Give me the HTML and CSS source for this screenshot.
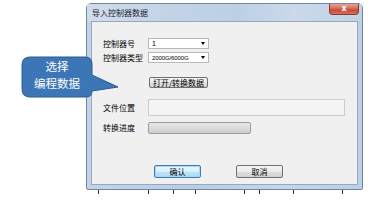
FILE: index.html
```html
<!DOCTYPE html>
<html lang="zh">
<head>
<meta charset="utf-8">
<link rel="stylesheet" href="styles.css">
</head>
<body>
<div class="stage">
  <div class="window">
    <div class="titlebar">
      <span class="title">导入控制器数据</span>
      <span class="close">x</span>
    </div>
    <div class="client">
      <div class="row r1">
        <span class="label">控制器号</span>
        <span class="combo"><span class="val">1</span><span class="arrow"></span></span>
      </div>
      <div class="row r2">
        <span class="label">控制器类型</span>
        <span class="combo"><span class="val small">2000G/6000G</span><span class="arrow"></span></span>
      </div>
      <div class="row r3">
        <span class="btn open">打开/转换数据</span>
      </div>
      <div class="row r4">
        <span class="label">文件位置</span>
        <span class="textbox"></span>
      </div>
      <div class="row r5">
        <span class="label">转换进度</span>
        <span class="progress"></span>
      </div>
      <div class="actions">
        <span class="btn ok">确认</span>
        <span class="btn cancel">取消</span>
      </div>
    </div>
  </div>
  <div class="ticks"></div>
  <div class="callout">
    <svg class="bubble" viewBox="18 53 104 48" width="104" height="48">
      <path d="M30,57 H85 Q92,57 92,64 V75 L118,87 L92,91 Q92,97 86,97 H30 Q22,97 22,89 V65 Q22,57 30,57 Z" fill="#3d76b6" stroke="#2a5a90" stroke-width="1"/>
    </svg>
    <div class="bubble-text">选择<br>编程数据</div>
  </div>
</div>
</body>
</html>
```
FILE: styles.css
```css
html, body {
  margin: 0;
  padding: 0;
  background: #ffffff;
}
body {
  width: 375px;
  height: 200px;
  overflow: hidden;
  font-family: "Noto Sans CJK SC", "Noto Sans", sans-serif;
  color: #000;
}
.stage {
  position: relative;
  padding: 3px 0 0 86px;
}
.window {
  box-sizing: border-box;
  width: 277px;
  height: 187px;
  border: 1px solid #6f86a3;
  border-radius: 5px 5px 2px 2px;
  background: linear-gradient(90deg, #c3d4e7 0%, #b9cde3 40%, #c6d6e8 70%, #bccfe4 100%);
  padding: 0 4px 4px 4px;
  display: flex;
  flex-direction: column;
}
.titlebar {
  height: 17px;
  display: flex;
  justify-content: space-between;
  align-items: center;
  background: linear-gradient(90deg, #cfdcea 0%, #c3d3e6 30%, #bcd0e5 55%, #cbd9e9 75%, #c0d2e6 100%);
  margin: 0 -4px;
  padding: 0 4px;
}
.title {
  font-size: 8px;
  line-height: 1;
  color: #1e2530;
  padding-left: 1px;
}
.close {
  align-self: flex-start;
  width: 30px;
  height: 11px;
  margin-right: -1px;
  box-sizing: border-box;
  border: 1px solid #8b3b32;
  border-top: none;
  border-radius: 0 0 4px 4px;
  background: linear-gradient(#e8a496 0%, #d66a57 45%, #c44a36 60%, #d4705d 100%);
  color: #fff;
  font-family: "DejaVu Sans", sans-serif;
  font-size: 8px;
  font-weight: bold;
  line-height: 10px;
  text-align: center;
}
.client {
  flex: 1;
  box-sizing: border-box;
  background: #f0f0f0;
  border: 1px solid #95a8c0;
  padding: 16px 0 0 11px;
  display: flex;
  flex-direction: column;
}
.row {
  display: flex;
  align-items: center;
}
.label {
  width: 45px;
  font-size: 8px;
  line-height: 1;
  white-space: nowrap;
}
.combo {
  box-sizing: border-box;
  width: 61px;
  height: 11px;
  border: 1px solid #b8b8b8;
  background: #fff;
  display: flex;
  align-items: center;
  justify-content: space-between;
  padding: 0 3px 0 3px;
}
.val {
  font-family: "Liberation Sans", sans-serif;
  font-size: 7px;
  line-height: 1;
}
.val.small {
  font-size: 6px;
  letter-spacing: -0.1px;
}
.arrow {
  width: 0;
  height: 0;
  border-left: 2.5px solid transparent;
  border-right: 2.5px solid transparent;
  border-top: 3px solid #000;
}
.r1 { height: 11px; }
.r2 { height: 11px; margin-top: 3px; }
.r3 { height: 11px; margin-top: 14px; padding-left: 46px; }
.r4 { height: 17px; margin-top: 11px; }
.r5 { height: 12px; margin-top: 6px; }
.btn {
  box-sizing: border-box;
  height: 11px;
  border: 1px solid #707070;
  border-radius: 2px;
  background: linear-gradient(#f4f4f4 0%, #ebebeb 50%, #dddddd 51%, #d2d2d2 100%);
  font-size: 8px;
  line-height: 9px;
  text-align: center;
  white-space: nowrap;
}
.open {
  width: 59px;
}
.textbox {
  box-sizing: border-box;
  width: 197px;
  height: 17px;
  border: 1px solid #cccccc;
  background: #f4f4f4;
}
.progress {
  box-sizing: border-box;
  width: 103px;
  height: 12px;
  border: 1px solid #9a9a9a;
  border-radius: 2px;
  background: linear-gradient(#e9e9e9 0%, #dadada 50%, #cfcfcf 100%);
}
.actions {
  display: flex;
  margin-top: 31px;
  padding-left: 51px;
  gap: 35px;
}
.actions .btn {
  width: 47px;
  height: 13px;
  line-height: 11px;
}
.ok {
  border-color: #3c7fb1 !important;
  box-shadow: inset 0 0 0 1px #a6d6f2;
  background: linear-gradient(#eaf6fd 0%, #d9f0fc 50%, #bee6fd 51%, #a7d9f5 100%) !important;
}
.ticks {
  height: 5px;
  margin-left: 12px;
  width: 262px;
  background-image:
    linear-gradient(#333, #333), linear-gradient(#333, #333), linear-gradient(#333, #333),
    linear-gradient(#333, #333), linear-gradient(#333, #333), linear-gradient(#333, #333),
    linear-gradient(#333, #333), linear-gradient(#333, #333);
  background-size: 1px 4px;
  background-repeat: no-repeat;
  background-position: 0 0, 50px 0, 75px 0, 97px 0, 146px 0, 161px 0, 195px 0, 244px 0;
}
.callout {
  position: absolute;
  left: 18px;
  top: 53px;
  width: 104px;
  height: 48px;
}
.bubble {
  position: absolute;
  left: 0;
  top: 0;
  display: block;
}
.bubble-text {
  position: absolute;
  left: 4px;
  top: 5px;
  width: 70px;
  text-align: center;
  color: #ffffff;
  font-size: 11.5px;
  line-height: 17px;
}
```
